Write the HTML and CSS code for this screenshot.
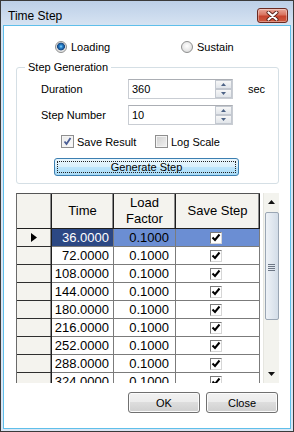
FILE: index.html
```html
<!DOCTYPE html>
<html lang="en">
<head>
  <meta charset="UTF-8">
  <title>Time Step</title>
  <link rel="stylesheet" href="styles.css">
</head>
<body>
  <div class="window">
    <div class="titlebar">
      <span class="title">Time Step</span>
      <button class="close-btn">
        <svg width="13" height="10" viewBox="0 0 13 10">
          <path d="M2.5 1.5 L10.5 8.5 M10.5 1.5 L2.5 8.5" stroke="#5a2118" stroke-width="4" stroke-linecap="round"/>
          <path d="M2.5 1.5 L10.5 8.5 M10.5 1.5 L2.5 8.5" stroke="#fff" stroke-width="2.2" stroke-linecap="round"/>
        </svg>
      </button>
    </div>

    <div class="client">
      <div class="mode-row">
        <label class="radio radio-first checked"><span class="radio-dot"></span>Loading</label>
        <label class="radio"><span class="radio-dot"></span>Sustain</label>
      </div>

      <fieldset class="group">
        <legend>Step Generation</legend>

        <div class="field-row">
          <span class="field-label">Duration</span>
          <div class="spin">
            <span class="spin-value">360</span>
            <div class="spin-btns">
              <span class="spin-b"><svg width="5" height="3" viewBox="0 0 5 3"><path d="M0 3 L2.5 0 L5 3Z" fill="#4d6386"/></svg></span>
              <span class="spin-b"><svg width="5" height="3" viewBox="0 0 5 3"><path d="M0 0 L2.5 3 L5 0Z" fill="#4d6386"/></svg></span>
            </div>
          </div>
          <span class="unit">sec</span>
        </div>

        <div class="field-row second">
          <span class="field-label">Step Number</span>
          <div class="spin">
            <span class="spin-value">10</span>
            <div class="spin-btns">
              <span class="spin-b"><svg width="5" height="3" viewBox="0 0 5 3"><path d="M0 3 L2.5 0 L5 3Z" fill="#4d6386"/></svg></span>
              <span class="spin-b"><svg width="5" height="3" viewBox="0 0 5 3"><path d="M0 0 L2.5 3 L5 0Z" fill="#4d6386"/></svg></span>
            </div>
          </div>
        </div>

        <div class="check-row">
          <label class="check check-first">
            <span class="cb"><svg width="9" height="9" viewBox="0 0 9 9"><path d="M1.5 4.5 L3.5 7 L7.5 1" fill="none" stroke="#4a5d95" stroke-width="1.8"/></svg></span>
            Save Result
          </label>
          <label class="check">
            <span class="cb empty"></span>
            Log Scale
          </label>
        </div>

        <button class="gen-btn"><span class="focus">Generate Step</span></button>
      </fieldset>

      <div class="grid">
        <div class="cells">
          <div class="hd"></div>
          <div class="hd">Time</div>
          <div class="hd">Load<br>Factor</div>
          <div class="hd">Save Step</div>

          <div class="rh"><svg width="6" height="9" viewBox="0 0 6 9"><path d="M0 0 L6 4.5 L0 9Z" fill="#000"/></svg></div>
          <div class="c cur">36.0000</div>
          <div class="c sel lf">0.1000</div>
          <div class="c sel ck"><span class="gchk"></span></div>

          <div class="rh"></div><div class="c">72.0000</div><div class="c lf">0.1000</div><div class="c ck"><span class="gchk"></span></div>
          <div class="rh"></div><div class="c">108.0000</div><div class="c lf">0.1000</div><div class="c ck"><span class="gchk"></span></div>
          <div class="rh"></div><div class="c">144.0000</div><div class="c lf">0.1000</div><div class="c ck"><span class="gchk"></span></div>
          <div class="rh"></div><div class="c">180.0000</div><div class="c lf">0.1000</div><div class="c ck"><span class="gchk"></span></div>
          <div class="rh"></div><div class="c">216.0000</div><div class="c lf">0.1000</div><div class="c ck"><span class="gchk"></span></div>
          <div class="rh"></div><div class="c">252.0000</div><div class="c lf">0.1000</div><div class="c ck"><span class="gchk"></span></div>
          <div class="rh"></div><div class="c">288.0000</div><div class="c lf">0.1000</div><div class="c ck"><span class="gchk"></span></div>
          <div class="rh"></div><div class="c">324.0000</div><div class="c lf">0.1000</div><div class="c ck"><span class="gchk"></span></div>
        </div>

        <div class="vscroll">
          <div class="sb-btn"><svg width="7" height="4" viewBox="0 0 7 4"><path d="M0 4 L3.5 0 L7 4Z" fill="#111"/></svg></div>
          <div class="sb-thumb">
            <span class="grip"></span><span class="grip"></span><span class="grip"></span><span class="grip"></span>
          </div>
          <div class="sb-space"></div>
          <div class="sb-btn"><svg width="7" height="4" viewBox="0 0 7 4"><path d="M0 0 L3.5 4 L7 0Z" fill="#111"/></svg></div>
        </div>
      </div>

      <div class="dialog-btns">
        <button class="btn">OK</button>
        <button class="btn">Close</button>
      </div>
    </div>
  </div>
</body>
</html>
```

FILE: styles.css
```css
body {
  margin: 0;
  font-family: "Liberation Sans", Arial, sans-serif;
  font-size: 11px;
  color: #000;
  background: #fff;
}

.window {
  width: 294px;
  height: 432px;
  box-sizing: border-box;
  border: 1px solid #3a3a3a;
  background: linear-gradient(#bccfe7, #d6e3f2 24px, #dae6f4);
  display: flex;
  flex-direction: column;
}

.titlebar {
  height: 24px;
  box-sizing: border-box;
  padding: 5px 5px 0 7px;
  display: flex;
  align-items: center;
  justify-content: space-between;
}

.title {
  font-size: 12px;
}

.close-btn {
  width: 31px;
  height: 15px;
  padding: 0;
  border: 1px solid #6b2a22;
  border-radius: 3px;
  background: linear-gradient(#e9a89b, #d9735f 45%, #c6432e 55%, #cf5a3f);
  box-shadow: inset 0 0 0 1px rgba(255, 255, 255, 0.35);
  display: flex;
  align-items: center;
  justify-content: center;
}

.client {
  flex: 1;
  margin: 0 2px 2px;
  border: 1px solid #5fbfea;
  background: #fff;
  display: flex;
  flex-direction: column;
}

/* radio buttons */
.mode-row {
  margin-top: 13px;
  height: 16px;
  padding-left: 51px;
  display: flex;
  align-items: center;
}

.radio {
  display: flex;
  align-items: center;
  gap: 4px;
}

.radio-first {
  width: 126px;
}

.radio-dot {
  width: 12px;
  height: 12px;
  box-sizing: border-box;
  border-radius: 50%;
  border: 1px solid #8e8f8f;
  background: radial-gradient(circle at 50% 40%, #ffffff, #e6e6e6 60%, #cfcfcf);
}

.radio.checked .radio-dot {
  background: radial-gradient(circle at 50% 45%, #8fdcff 0, #2a86d2 1.5px, #17467f 3.6px, #dedede 4.2px, #f6f6f6 100%);
}

/* group box */
.group {
  margin: 6px 11px 0 12px;
  padding: 0 0 7px 0;
  border: 1px solid #d5dfe5;
  border-radius: 3px;
  min-width: 0;
}

.group legend {
  margin-left: 8px;
  padding: 0 3px;
  line-height: 13px;
}

.field-row {
  margin-top: 5px;
  height: 20px;
  padding-left: 24px;
  display: flex;
  align-items: center;
}

.field-row.second {
  margin-top: 6px;
}

.field-label {
  width: 87px;
}

.spin {
  width: 105px;
  height: 20px;
  box-sizing: border-box;
  border: 1px solid #c9cdd3;
  border-top-color: #abaeb4;
  display: flex;
  align-items: center;
}

.spin-value {
  padding-left: 3px;
}

.spin-btns {
  margin-left: auto;
  width: 17px;
  height: 18px;
  display: flex;
  flex-direction: column;
}

.spin-b {
  flex: 1;
  box-sizing: border-box;
  border: 1px solid #c3c8d0;
  background: linear-gradient(#f7f7f7, #e1e5ea);
  display: flex;
  align-items: center;
  justify-content: center;
}

.unit {
  margin-left: 15px;
}

/* check boxes */
.check-row {
  margin-top: 9px;
  height: 15px;
  padding-left: 44px;
  display: flex;
  align-items: center;
}

.check {
  display: flex;
  align-items: center;
  gap: 3px;
}

.check-first {
  width: 94px;
}

.cb {
  width: 13px;
  height: 13px;
  box-sizing: border-box;
  border: 1px solid #8f8f8f;
  background: linear-gradient(135deg, #e9e9e9, #fbfbfb);
  box-shadow: inset 0 0 0 1px #f4f4f4;
  display: flex;
  align-items: center;
  justify-content: center;
}

.cb.empty {
  background: linear-gradient(135deg, #cfcfcf, #f3f3f3);
}

.gen-btn {
  margin: 9px 0 0 37px;
  width: 185px;
  height: 18px;
  padding: 2px;
  border: 1px solid #3c7fb1;
  border-radius: 3px;
  background: linear-gradient(#eaf6fd, #d9f0fc 50%, #bee6fd 50%, #a9dbf6);
  font: inherit;
  display: flex;
}

.gen-btn .focus {
  flex: 1;
  border: 1px dotted #222;
  line-height: 10px;
  text-align: center;
}

/* data grid */
.grid {
  margin: 9px 0 0 12px;
  width: 263px;
  height: 190px;
  overflow: hidden;
  display: flex;
}

.cells {
  align-self: flex-start;
  display: grid;
  grid-template-columns: 35px 62px 62px 84px;
  grid-template-rows: 35px;
  grid-auto-rows: 18px;
  border-top: 1px solid #555;
  border-left: 1px solid #6a6a6a;
  font-size: 13px;
}

.hd {
  background: #f4f3ee;
  border-right: 1px solid #1e1e1e;
  border-bottom: 1px solid #1e1e1e;
  box-shadow: inset -1px 0 0 #8c8c8c;
  line-height: 16px;
  text-align: center;
  display: flex;
  align-items: center;
  justify-content: center;
}

.rh {
  background: #f4f3ee;
  border-right: 1px solid #1e1e1e;
  border-bottom: 1px solid #2e2e2e;
  box-shadow: inset -1px 0 0 #8c8c8c;
  display: flex;
  align-items: center;
  justify-content: center;
}

.c {
  border-right: 1px solid #7b7b7b;
  border-bottom: 1px solid #7b7b7b;
  line-height: 17px;
  text-align: right;
  padding-right: 4px;
}

.c.lf {
  padding-right: 6px;
}

.c.cur {
  background: #2c4884;
  color: #fff;
}

.c.sel {
  background: #6b8ed3;
}

.c.ck {
  padding: 0;
  display: flex;
  align-items: center;
  justify-content: center;
}

.gchk {
  width: 12px;
  height: 12px;
  margin-left: -3px;
  box-sizing: border-box;
  border: 1px solid #7a7a7a;
  border-right-color: #d6d6d6;
  border-bottom-color: #d6d6d6;
  background: #fff url("data:image/svg+xml;utf8,<svg xmlns='http://www.w3.org/2000/svg' width='10' height='10' viewBox='0 0 10 10'><path d='M1.5 4.5 L4 7 L8.5 1.5' fill='none' stroke='black' stroke-width='2'/></svg>") center / 10px 10px no-repeat;
}

.vscroll {
  margin-left: 3px;
  width: 16px;
  height: 190px;
  box-sizing: border-box;
  background: #f3f3ee;
  border-left: 1px solid #e6e6e0;
  display: flex;
  flex-direction: column;
  align-items: center;
}

.sb-btn {
  height: 18px;
  width: 100%;
  display: flex;
  align-items: center;
  justify-content: center;
}

.sb-thumb {
  margin-top: 1px;
  width: 14px;
  height: 108px;
  box-sizing: border-box;
  border: 1px solid #9aa6b4;
  border-radius: 2px;
  background: linear-gradient(to right, #eef2f7, #d3dde8);
  display: flex;
  flex-direction: column;
  align-items: center;
  justify-content: flex-end;
  padding-bottom: 48px;
  gap: 1px;
}

.grip {
  width: 7px;
  height: 1px;
  background: #6d7785;
}

.sb-space {
  flex: 1;
}

/* dialog buttons */
.dialog-btns {
  margin-top: 9px;
  padding-right: 12px;
  display: flex;
  justify-content: flex-end;
  gap: 6px;
}

.btn {
  width: 72px;
  height: 21px;
  padding: 0;
  border: 1px solid #707070;
  border-radius: 3px;
  background: linear-gradient(#f2f2f2, #ebebeb 50%, #dddddd 50%, #cfcfcf);
  box-shadow: inset 0 0 0 1px #fbfbfb;
  font: inherit;
  font-size: 11px;
}
```
